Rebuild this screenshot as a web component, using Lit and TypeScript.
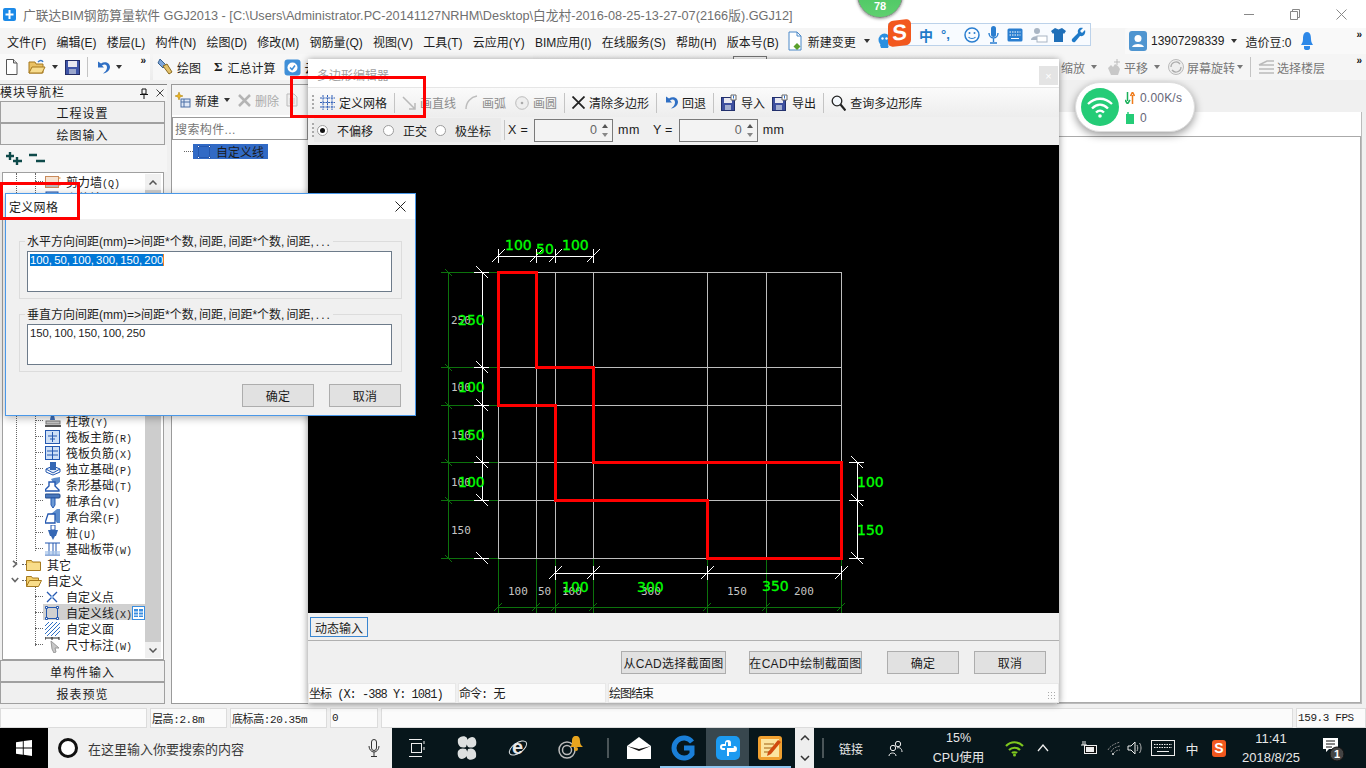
import { LitElement, html, css, svg } from 'lit'
import { customElement } from 'lit/decorators.js'

const ic = (w: number, h: number, body: unknown) => html`<svg class="ic" width=${w} height=${h} viewBox="0 0 ${w} ${h}">${body}</svg>`

const B = '#2458b0'

// toolbar icons
const iNew = ic(13, 16, svg`<path d="M1.5.5h7l3.500 3.500v11.500h-10.500z" fill="#fff" stroke="#555"/><path d="M8.500.5v3.500h3.500" fill="#ddd" stroke="#555"/>`)
const iOpen = ic(18, 16, svg`<path d="M1 3h6l1 2h7v9H1z" fill="#e9c164" stroke="#a5791f"/><path d="M1 14l3-6h13l-3 6z" fill="#f7dc8e" stroke="#a5791f"/><path d="M10 3c2-2 4-2 5 0" fill="none" stroke="#3a7ac8" stroke-width="1.500"/>`)
const iSave = ic(15, 15, svg`<rect x=".5" y=".5" width="14" height="14" fill="#3f55a8" stroke="#222c66"/><rect x="3" y="1" width="9" height="6" fill="#e8e8f0"/><rect x="4" y="9" width="7" height="5" fill="#9aa6cc"/>`)
const iUndo = ic(14, 15, svg`<path d="M2 1.500v6h6l-2-2c3-2 5-.5 5 2 0 2.500-2 4.500-4 6 4-.5 7-3.500 7-6.500 0-4-5-6.500-9-3.500z" fill="#2f6fc4"/>`)
const iDraw = ic(16, 18, svg`<path d="M3 1l6 6-3 3-5-5z" fill="#7ea6d8" stroke="#37608f"/><path d="M6 8l6 8 3-2-5-8z" fill="#e3c16a" stroke="#8a6a20"/>`)
const iCloud = ic(17, 17, svg`<rect x=".5" y=".5" width="16" height="16" rx="3" fill="#3f8fd8"/><circle cx="8.500" cy="8.500" r="5" fill="#fff"/><path d="M6 8.500l2 2 3-4" fill="none" stroke="#3f8fd8" stroke-width="1.500"/>`)
const iNewC = ic(16, 16, svg`<rect x="6" y="7" width="9" height="8" fill="#dfe8f6" stroke="#4a6fa5"/><path d="M6 10h9M9 7v8" stroke="#4a6fa5"/><path d="M4 0l1 3 3 1-3 1-1 3-1-3-3-1 3-1z" fill="#eeb422" stroke="#a67c00" stroke-width=".5"/>`)
const iDel = ic(13, 13, svg`<path d="M1 1l11 11M12 1L1 12" stroke="#b4b4b4" stroke-width="2.500"/>`)
const iCopy = ic(12, 14, svg`<path d="M1 1h7l3 3v9H1z" fill="#eee" stroke="#bbb"/><path d="M3 6h6M3 8h6M3 10h6" stroke="#ccc"/>`)
const iGrid = ic(15, 15, svg`<path d="M3 0v15M7.500 0v15M12 0v15M0 3h15M0 7.500h15M0 12h15" stroke="#2f5fb8" stroke-width="1" stroke-dasharray="2 .7"/>`)
const iLine = ic(14, 14, svg`<path d="M1 1l12 12M13 7v6H7" fill="none" stroke="#b9b9b9" stroke-width="1.500"/>`)
const iArc = ic(13, 15, svg`<path d="M1 14C1 7 6 2 12 1" fill="none" stroke="#bdbdbd" stroke-width="1.500"/>`)
const iCirc = ic(14, 14, svg`<circle cx="7" cy="7" r="6.300" fill="#eee" stroke="#bbb"/><circle cx="7" cy="7" r="1.300" fill="#aaa"/>`)
const iClear = ic(13, 13, svg`<path d="M.5.5l12 12M12.500.5l-12 12" stroke="#222" stroke-width="1.800"/>`)
const iIO = ic(16, 17, svg`<rect x=".5" y="3.500" width="13" height="13" fill="#3d4f9f" stroke="#22306c"/><rect x="3" y="4" width="8" height="5" fill="#e8e8f0"/><rect x="4" y="11" width="6" height="5" fill="#a3aed0"/><path d="M10 1h5v5h-5z" fill="#fff" stroke="#666"/><path d="M12.500 1.500v3" stroke="#2f6fc4"/>`)
const iFind = ic(15, 16, svg`<circle cx="6" cy="6" r="4.800" fill="#f4f8fc" stroke="#222" stroke-width="1.300"/><path d="M9.500 9.500l5 6" stroke="#222" stroke-width="2.200"/>`)
const iDoc = ic(14, 20, svg`<path d="M1 1h8l4 4v14H1z" fill="#fff" stroke="#4a88c8"/><path d="M9 1v4h4" fill="none" stroke="#4a88c8"/><path d="M9 12l3.500 3.500-3.500 3.500-3.500-3.500z" fill="#5aa02c"/>`)
const iPan = ic(16, 18, svg`<path d="M2 10l3-3 2 2 2-3 3 2 2 3-2 6H5z" fill="#c8c8c8"/><path d="M11 1v6M8 4h6" stroke="#bbb"/>`)
const iRot = ic(18, 18, svg`<circle cx="9" cy="9" r="7.500" fill="#eee" stroke="#bbb"/><path d="M4 9a5 5 0 0 1 9-3M14 9a5 5 0 0 1-9 3" fill="none" stroke="#aaa" stroke-width="1.300"/>`)
const iFloor = ic(17, 14, svg`<path d="M1 5l8-4h7M1 9h15M1 13h15M1 5h15" fill="none" stroke="#bbb" stroke-width="1.500"/>`)
const iUser = ic(18, 20, svg`<rect width="18" height="20" rx="3" fill="#4f95d0"/><circle cx="9" cy="7.500" r="3.500" fill="#fff"/><path d="M3 16c1-4 11-4 12 0z" fill="#fff"/>`)
const iBell = ic(14, 20, svg`<path d="M7 1c3 0 4 3 4 7 0 3 1 4 2 6H1c1-2 2-3 2-6 0-4 1-7 4-7z" fill="#2d88e8"/><path d="M4 15h6v2a3 2 0 0 1-6 0z" fill="#2d88e8"/>`)
const iQQ = ic(13, 16, svg`<ellipse cx="6.500" cy="7" rx="6" ry="6.500" fill="#2b8fe0"/><circle cx="4.500" cy="5.500" r="1.200" fill="#fff"/><circle cx="8.500" cy="5.500" r="1.200" fill="#fff"/><path d="M2 12h9l-1 3H3z" fill="#2b8fe0"/>`)

// IME strip
const iMicB = ic(11, 18, svg`<rect x="3" y="0" width="5" height="11" rx="2.500" fill="#2a7ed0"/><path d="M1 7a4.500 5 0 0 0 9 0M5.500 12v4M2 17h7" fill="none" stroke="#2a7ed0" stroke-width="1.400"/>`)
const iSmile = ic(16, 16, svg`<circle cx="8" cy="8" r="7" fill="none" stroke="#2a7ed0" stroke-width="1.500"/><circle cx="5.500" cy="6" r="1" fill="#2a7ed0"/><circle cx="10.500" cy="6" r="1" fill="#2a7ed0"/><path d="M4.500 10c1.500 2 5.500 2 7 0" fill="none" stroke="#2a7ed0" stroke-width="1.200"/>`)
const iKeysB = ic(16, 14, svg`<rect x=".5" y=".5" width="15" height="13" rx="1.500" fill="#2a7ed0"/><path d="M2.500 4h11M2.500 7h11" stroke="#fff" stroke-dasharray="1.500 1"/><path d="M4 10.500h8" stroke="#fff"/>`)
const iPerson = ic(17, 16, svg`<circle cx="6" cy="4" r="3" fill="#a9b5c4"/><path d="M0 13c0-5 11-5 11 0z" fill="#a9b5c4"/><rect x="6" y="9" width="10" height="6" fill="#fff" stroke="#a9b5c4"/>`)
const iShirt = ic(15, 16, svg`<path d="M4 1l3.500 1.500L11 1l4 3-2 3-1-1v9H3V6L2 7 0 4z" fill="#1f6fb8"/>`)
const iWrench = ic(15, 16, svg`<path d="M14 3l-3 3-2-2 3-3c-3-1-6 1-5 5L1 12c-1 2 1 4 3 3l5-6c4 1 6-3 5-6z" fill="#1f7ac8"/>`)

// tree icons
const tBox = (inner: unknown) => ic(16, 14, svg`<rect x=".5" y=".5" width="14" height="13" fill="#cfe0f6" stroke="${B}"/>${inner}`)
const tree = {
  wall: ic(16, 14, svg`<rect x=".5" y="1.500" width="13" height="11" fill="#f6e3d2" stroke="#c98a5a"/><rect x="1" y="8" width="12" height="4" fill="#b8b8b8"/><path d="M14 3h1.500M14 10h1.500" stroke="#e08a20"/>`),
  beam: ic(16, 14, svg`<rect x="1" y="1" width="12" height="11" fill="#9dc0e8" stroke="${B}"/>`),
  pier: ic(16, 14, svg`<path d="M6 1h3l1 5H5z" fill="#3f6fb8"/><rect x="1" y="7" width="14" height="3" fill="#c8c8c8" stroke="#777"/><rect x="0" y="11" width="16" height="2" fill="#555"/>`),
  main: tBox(svg`<path d="M7.500 2v10M3 6h9M5 9h5" stroke="${B}"/>`),
  neg: tBox(svg`<path d="M7.500 1v12M2 5h11M2 9h11" stroke="${B}"/>`),
  iso: ic(16, 15, svg`<path d="M1 8l7-3 7 3-7 4z" fill="#dce8f8" stroke="${B}"/><path d="M1 8v3l7 3 7-3V8" fill="none" stroke="${B}"/><path d="M5 1h6v8H5z" fill="#3567b4"/>`),
  strip: ic(16, 15, svg`<path d="M6 2l3-1 6-1v5l-5 4z" fill="#5c8ccc"/><path d="M4 5h6v4l4 4v1H0v-1l4-4z" fill="#fff" stroke="${B}" stroke-width="1.400"/>`),
  cap: ic(16, 15, svg`<rect x="0" y="1" width="15" height="4" rx="1" fill="#4a78bc" stroke="#234a8a"/><path d="M6 5h4v7l-2 3-2-3z" fill="#6d9ad4" stroke="${B}"/>`),
  cbeam: ic(16, 15, svg`<path d="M6 5l6-5h3v14h-3z" fill="#5c8ccc"/><path d="M3 5h7v9H0z" fill="#fff" stroke="${B}" stroke-width="1.300"/>`),
  pile: ic(16, 15, svg`<rect x="6" y="0" width="4" height="5" fill="#fff" stroke="${B}"/><path d="M3 5h10l-2 6H5z" fill="#3567b4"/><path d="M6 11h4l-2 4z" fill="#3567b4"/>`),
  band: ic(16, 14, svg`<path d="M0 1h15M0 13h15M4 1v12M8 1v12M11 1v12" stroke="${B}"/><rect x="0" y="9" width="15" height="4" fill="#a8c4ea" opacity=".7"/>`),
  point: ic(14, 14, svg`<path d="M2 2l10 10M12 2L2 12" stroke="${B}" stroke-width="1.300"/><circle cx="7" cy="7" r="1.500" fill="#8cb4e8"/>`),
  line: ic(14, 14, svg`<rect x="1.500" y="1.500" width="11" height="11" fill="none" stroke="${B}"/><path d="M.5.5h2v2h-2zM11.500.5h2v2h-2zM.5 11.500h2v2h-2zM11.500 11.500h2v2h-2z" fill="#fff" stroke="${B}"/>`),
  face: ic(15, 14, svg`<path d="M0 4l4-4M0 8l8-8M0 12l12-12M2 14L15 1M6 14l9-9M10 14l5-5" stroke="#2e6fc4"/>`),
  dim: ic(15, 16, svg`<path d="M0 1h14M0 0v3M7 0v3M14 0v3" stroke="#222"/><path d="M6 4l8 7-4 0 1 4-2 1-2-4z" fill="#c8c8c8" stroke="#999"/>`)
}
const folder = ic(15, 12, svg`<path d="M.5 11.500v-10h5l1 1.500h8v8.500z" fill="#f3ce68" stroke="#a5791f"/><rect x="1" y="4" width="13" height="7" fill="#f9dd8a"/>`)
const folderOpen = ic(16, 12, svg`<path d="M.5 11.500v-10h5l1 1.500h6v3" fill="#f3ce68" stroke="#a5791f"/><path d="M.5 11.500l3-6h12l-3 6z" fill="#f9dd8a" stroke="#a5791f"/>`)

const treeRows: [unknown, string, string][] = [
  [tree.pier, '柱墩', 'Y'], [tree.main, '筏板主筋', 'R'], [tree.neg, '筏板负筋', 'X'], [tree.iso, '独立基础', 'P'],
  [tree.strip, '条形基础', 'T'], [tree.cap, '桩承台', 'V'], [tree.cbeam, '承台梁', 'F'], [tree.pile, '桩', 'U'], [tree.band, '基础板带', 'W']
]

const menus = ['文件(F)', '编辑(E)', '楼层(L)', '构件(N)', '绘图(D)', '修改(M)', '钢筋量(Q)', '视图(V)', '工具(T)', '云应用(Y)', 'BIM应用(I)', '在线服务(S)', '帮助(H)', '版本号(B)']

// drawing coordinates, in page pixels
const XS = [498, 536, 555, 593, 707, 766, 841]
const YS = [272, 367, 405, 462, 500, 558]
const POLY = '498,272 536,272 536,367 593,367 593,462 841,462 841,558 707,558 707,500 555,500 555,405 498,405'
const GRAY_L: [number, number, string][] = [[451, 324, '250'], [451, 391, '100'], [451, 439, '150'], [451, 486, '100'], [451, 534, '150'], [508, 595, '100'], [538, 595, '50'], [562, 595, '100'], [641, 595, '300'], [727, 595, '150'], [794, 595, '200']]
const GREEN_L: [number, number, string][] = [[505, 250, '100'], [536, 254, '50'], [562, 250, '100'], [458, 325, '250'], [458, 392, '100'], [458, 440, '150'], [458, 487, '100'], [857, 487, '100'], [857, 535, '150'], [562, 592, '100'], [637, 592, '300'], [762, 591, '350']]

function drawing() {
  const vTick = (x: number, y: number) => svg`<path d="M${x + .5} ${y - 7}v14M${x - 6} ${y + 6}l13-13" stroke="#fff" fill="none"/>`
  const hTick = (x: number, y: number) => svg`<path d="M${x - 8} ${y + .5}h15M${x - 6} ${y - 6}l12 12" stroke="#fff" fill="none"/>`
  return html`<svg class="cad" width="751" height="468" viewBox="308 145 751 468" shape-rendering="crispEdges">
    ${XS.map(x => svg`<path d="M${x + .5} 272V558" stroke="#bdbdbd"/><path d="M${x + .5} 558V613" stroke="#0c720c"/>`)}
    ${YS.map(y => svg`<path d="M498 ${y + .5}H841" stroke="#bdbdbd"/><path d="M441 ${y + .5}H498" stroke="#0c720c"/>${hTick(482, y)}`)}
    <path d="M448.500 272V558M498 607.500H841" stroke="#0c720c"/>
    ${YS.map(y => svg`<path d="M445 ${y - 3}l7 7" stroke="#0c720c" shape-rendering="auto"/>`)}
    ${XS.map(x => svg`<path d="M${x - 4} 611l8-8" stroke="#0c720c" shape-rendering="auto"/>`)}
    <path d="M482.500 272V500M498 256.500H593M857 462V558M555 573.500H841" stroke="#fff"/>
    ${[498, 536, 555, 593].map(x => vTick(x, 256))}
    ${[462, 500, 558].map(y => hTick(857, y))}
    ${[555, 593, 707, 841].map(x => vTick(x, 573))}
    <polygon points=${POLY} fill="none" stroke="#f00" stroke-width="3"/>
    <g shape-rendering="auto">
      ${GRAY_L.map(([x, y, t]) => svg`<text x=${x} y=${y} class="lbl">${t}</text>`)}
      ${GREEN_L.map(([x, y, t]) => svg`<text x=${x} y=${y} class="dim">${t}</text>`)}
    </g>
  </svg>`
}

@customElement('app-root')
export class AppRoot extends LitElement {
  static styles = css`
    :host {
      display: block;
      width: 1366px;
      height: 768px;
      position: relative;
      overflow: hidden;
      font: 12px "Liberation Sans", "Noto Sans CJK SC", sans-serif;
      color: #1c1c1c;
      background: #f0f0f0;
    }
    .ic { display: block; flex: none; }
    .app { display: flex; flex-direction: column; height: 768px; }

    .titlebar { height: 28px; background: #fff; display: flex; align-items: center; padding-left: 3px; color: #707070; font-size: 12.730px; }
    .titlebar .logo { margin-right: 7px; }
    .titlebar .name { flex: 1; white-space: nowrap; }
    .winbtns { display: flex; padding-right: 2px; }
    .winbtns span { width: 46px; display: flex; justify-content: center; }

    .menubar { height: 26px; background: #f5f5f5; display: flex; align-items: center; padding-left: 7px; white-space: nowrap; }
    .menus { display: flex; gap: 10.200px; }
    .change { display: flex; align-items: center; gap: 6px; margin-left: 9px; }
    .caret { width: 0; height: 0; border: 3px solid transparent; border-top: 4px solid #333; border-bottom: 0; flex: none; }
    .caret.light { border-top-color: #777; }
    .change .caret { margin-left: 2px; }
    .qq { margin-left: 8px; }
    .account { margin-left: auto; width: 241px; height: 26px; display: flex; align-items: center; gap: 4px; background: #f9f9f9; border-radius: 3px 0 0 0; padding-left: 4px; position: relative; box-sizing: border-box; }
    .account .caret { margin: 0 4px 0 3px; }
    .account .bell { margin-left: 5px; }
    .more { font: bold 10px "Liberation Sans"; letter-spacing: -1px; color: #111; position: absolute; right: 5px; top: 1px; }

    .toolbars { height: 26px; background: linear-gradient(#f6f6f6, #ececec); display: flex; align-items: center; white-space: nowrap; }
    .tb { display: flex; align-items: center; height: 26px; position: relative; box-sizing: border-box; }
    .tb.a { width: 150px; padding-left: 5px; background: #fafafa; }
    .tb.a .sp { width: 10px; }
    .tb.b { padding-left: 4px; gap: 4px; margin-left: 3px; width: 380px; background: #f7f7f7; }
    .tb.c { width: 307px; padding-left: 2px; gap: 2px; margin-left: auto; color: #777; background: #f5f5f5; }
    .tb.a .caret { margin: 0 7px 0 6px; }
    .tb.a .vsep { margin: 0 8px 0 7px; }
    .tb.c .c1 { margin: 0 7px 0 4px; }
    .tb.c .c2 { margin: 0 5px 0 4px; }
    .tb.c .vsep { margin: 0 5px; }
    .vsep { width: 1px; height: 20px; background: #c4c4c4; flex: none; }
    .sigma { font: bold 13px "Liberation Serif"; margin: 0 1px 0 9px; }

    .main { flex: 1; display: flex; min-height: 0; padding-top: 4px; }
    .nav { width: 167px; flex: none; display: flex; flex-direction: column; padding-bottom: 4px; box-sizing: border-box; }
    .navhead { height: 16px; display: flex; align-items: center; padding: 0 3px 0 0; background: #f5f5f5; border-top: 1px solid #888; line-height: 14px; letter-spacing: 1px; flex: none; }
    .navhead .x { margin-left: auto; display: flex; gap: 8px; align-items: center; letter-spacing: 0; }
    .navbtn { height: 22px; margin: 0 2px 0 0; display: flex; align-items: center; justify-content: center; border: 1px solid #a0a0a0; background: #f0f0f0; letter-spacing: 1px; box-sizing: border-box; flex: none; }
    .plusbar { height: 27px; display: flex; align-items: center; gap: 7px; padding-left: 6px; box-sizing: border-box; background: #f5f5f5; flex: none; }
    .tree { flex: 1; margin: 0 3px 0 2px; border: 1px solid #a0a0a0; background: #fff; display: flex; position: relative; min-height: 0; overflow: hidden; }
    .rows { flex: 1; position: relative; }
    .row { height: 16px; display: grid; grid-template-columns: 17px auto; gap: 4px; align-items: center; padding-left: 42px; position: relative; white-space: nowrap; }
    .row::before { content: ""; width: 8px; border-top: 1px dotted #666; position: absolute; left: 32px; top: 8px; }
    .row .ic { position: relative; }
    .row .key { font: 10px "Liberation Mono", monospace; }
    .row.sel { background: linear-gradient(to right, transparent 40px, #d0d0d0 40px); width: 142px; box-sizing: border-box; }
    .row.top { padding-left: 23px; grid-template-columns: 15px auto; gap: 6px; }
    .row.top::before { left: 19px; width: 4px; }
    .row.top .arrow { position: absolute; left: 8px; top: 4px; }
    .gap { height: 207px; }
    .vline { position: absolute; left: 32px; top: 0; height: 378px; border-left: 1px dotted #666; }
    .vline.out { left: 13px; height: 390px; }
    .vline.sub { top: 413px; height: 60px; }
    .mini { position: absolute; left: 129px; top: 433px; }
    .scroll { width: 16px; background: #cdcdcd; display: flex; flex-direction: column; justify-content: space-between; align-items: center; margin: 1px 2px 1px 0; flex: none; }
    .scroll span { height: 16px; width: 16px; background: #f0f0f0; display: flex; align-items: center; justify-content: center; }

    .comp { width: 137px; margin: 0 0 4px 4px; flex: none; background: #fff; border: 1px solid #9a9a9a; border-right: 0; display: flex; flex-direction: column; white-space: nowrap; overflow: hidden; box-sizing: border-box; }
    .comphead { height: 30px; display: flex; align-items: center; gap: 4px; padding-left: 3px; background: #f4f4f4; flex: none; }
    .comphead .off { color: #aaa; margin-right: 3px; }
    .comphead .caret { margin: 0 4px 0 1px; }
    .search { height: 23px; margin: 2px 0 0; border: 1px solid #999; color: #777; display: flex; align-items: center; padding-left: 2px; letter-spacing: .4px; box-sizing: border-box; flex: none; }
    .item { display: flex; align-items: center; margin: 4px 0 0 12px; height: 15px; }
    .item i { width: 9px; border-top: 1px dotted #666; }
    .item div { width: 75px; height: 15px; background: #316ac5; display: flex; align-items: center; gap: 5px; padding-left: 4px; box-sizing: border-box; }

    .view { flex: 1; padding: 28px 4px 4px 0; display: flex; justify-content: flex-end; }
    .viewbox { width: 305px; background: #fff; border: 1px solid #bbb; border-top: 0; padding-top: 24px; box-sizing: border-box; }
    .viewinner { height: 100%; border: 1px solid #aaa; box-sizing: border-box; }

    .status { height: 20px; display: flex; gap: 3px; background: #f0f0f0; flex: none; }
    .status div { background: #fbfbfb; border: 1px solid #dcdcdc; box-sizing: border-box; display: flex; align-items: center; padding-left: 1px; font: 11px "Liberation Mono", "Noto Sans CJK SC", monospace; letter-spacing: -.4px; flex: none; }

    .taskbar { height: 40px; background: #07161b; display: flex; align-items: center; color: #e8e8e8; position: relative; white-space: nowrap; flex: none; }
    .start { width: 48px; height: 40px; background: #000; display: flex; align-items: center; justify-content: center; flex: none; }
    .searchbox { width: 344px; height: 40px; background: #f0f0f0; display: flex; align-items: center; padding: 0 12px 0 9px; box-sizing: border-box; color: #3a3a3a; font-size: 13px; gap: 9px; flex: none; }
    .searchbox .mic { margin-left: auto; }
    .slot { height: 40px; display: flex; align-items: center; justify-content: center; flex: none; position: relative; }
    .slot.on { background: #38474e; }
    .slot.run::after { content: ""; position: absolute; left: 0; right: 0; bottom: 0; height: 2px; background: #8ec5f0; }
    .thinsep { width: 2px; height: 20px; background: #4a5558; }
    .scrollcol { width: 19px; height: 40px; background: #eee; display: flex; flex-direction: column; align-items: center; justify-content: space-around; margin-left: 4px; flex: none; }
    .cpu { flex-direction: column; line-height: 20px; font-size: 12.500px; }
    .clock { flex-direction: column; line-height: 19px; font-size: 13px; }
    .traygap { width: 19px; flex: none; }
    .zh-tray { font-size: 13px; }
    .s-tray { background: #f2581e; border-radius: 3px; width: 14px; height: 17px; color: #fff; font: bold 14px "Liberation Sans"; display: flex; align-items: center; justify-content: center; }
    .ie-e { font: bold 20px "Liberation Sans"; fill: #e8e8e8; }
    .note-n { font: bold 11px "Liberation Sans"; fill: #fff; }

    .editor { position: absolute; left: 308px; top: 59px; width: 751px; height: 644px; background: #f0f0f0; box-shadow: 0 1px 7px rgba(0, 0, 0, .45); display: flex; flex-direction: column; white-space: nowrap; }
    .edtitle { height: 29px; background: #fff; color: #a0a0a0; padding: 7px 0 0 9px; box-sizing: border-box; position: relative; border-bottom: 1px solid #e6e6e6; flex: none; }
    .edclose { position: absolute; left: 731px; top: 7px; width: 19px; height: 19px; background: #e4e4e4; color: #fff; display: flex; align-items: center; justify-content: center; font-size: 11px; }
    .edtools { height: 29px; background: linear-gradient(#fbfbfb, #ededed); display: flex; align-items: center; padding-left: 4px; gap: 7px; flex: none; }
    .grip { width: 2px; height: 15px; background-image: linear-gradient(#aaa 50%, transparent 50%); background-size: 2px 4px; margin-right: -1px; flex: none; }
    .tool { display: flex; align-items: center; gap: 4px; }
    .tool.off { color: #8c8c8c; padding-right: 2px; }
    .tool.off.end { padding-right: 0; }
    .edopts { height: 24px; margin-top: 1px; display: flex; align-items: center; padding-left: 4px; flex: none; }
    .edopts .grip { margin-right: 0; }
    .radios { display: flex; align-items: center; gap: 8px; height: 24px; background: #eaeaea; padding: 0 10px 0 3px; }
    .radio { display: flex; align-items: center; gap: 9px; }
    .radio.second { margin-left: 2px; }
    .dot { width: 11px; height: 11px; border-radius: 50%; border: 1px solid #9c9c9c; background: #fff; box-sizing: border-box; display: flex; align-items: center; justify-content: center; }
    .dot i { width: 5px; height: 5px; border-radius: 50%; background: #111; }
    .edopts .vsep { margin-left: 3px; }
    .xy { letter-spacing: .3px; margin: 0 6px 0 3px; font-size: 12.500px; }
    .xy.y { margin-left: 0; }
    .spin { width: 79px; height: 23px; background: #f3f3f3; border: 1px solid #7a7a7a; box-sizing: border-box; display: flex; align-items: center; justify-content: flex-end; color: #666; padding-right: 4px; gap: 5px; font-size: 12.500px; }
    .spin b { display: flex; flex-direction: column; gap: 5px; }
    .spin b i { width: 0; height: 0; border: 3px solid transparent; }
    .spin b i:first-child { border-top: 0; border-bottom: 4px solid #555; }
    .spin b i:last-child { border-bottom: 0; border-top: 4px solid #888; }
    .mm { margin: 0 13px 0 5px; font-size: 12.500px; letter-spacing: .5px; }
    .canvas { height: 468px; margin-top: 3px; background: #000; flex: none; }
    .cad { display: block; }
    .cad .lbl { font: 11px "DejaVu Sans Mono", monospace; fill: #c4c4c4; }
    .cad .dim { font: 14px "DejaVu Sans", sans-serif; fill: #0f0; stroke: #0f0; stroke-width: .3px; }
    .dyn { height: 28px; box-sizing: border-box; display: flex; align-items: flex-end; padding: 0 0 3px 2px; border-bottom: 1px solid #b0b0b0; flex: none; }
    .dyn span { width: 58px; height: 20px; box-sizing: border-box; border: 1px solid #3a86d0; display: flex; align-items: center; justify-content: center; background: #f0f0f0; }
    .edbtns { height: 42px; display: flex; align-items: center; justify-content: flex-end; padding-right: 13px; gap: 15px; flex: none; }
    .btn { height: 23px; background: #e1e1e1; border: 1px solid #adadad; box-sizing: border-box; display: flex; align-items: center; justify-content: center; width: 72px; flex: none; letter-spacing: .3px; }
    .btn.w1 { width: 105px; margin-right: 8px; }
    .btn.w2 { width: 113px; margin-right: 10px; }
    .edstatus { height: 20px; display: flex; gap: 2px; flex: none; margin-top: auto; }
    .edstatus div { background: #fbfbfb; border: 1px solid #e8e8e8; box-sizing: border-box; display: flex; align-items: center; font: 12px "Liberation Mono", "Noto Sans CJK SC", monospace; letter-spacing: -1px; width: 148px; }
    .edstatus .fill { flex: 1; position: relative; }
    .gripper { position: absolute; right: 1px; bottom: 1px; width: 10px; height: 10px; background-image: radial-gradient(#aaa 40%, transparent 45%); background-size: 3px 3px; }

    .dialog { position: absolute; left: 5px; top: 193px; width: 411px; height: 223px; background: #f0f0f0; border: 1px solid #4a98e8; box-sizing: border-box; box-shadow: 0 2px 8px rgba(0, 0, 0, .3); display: flex; flex-direction: column; }
    .dlgtitle { height: 25px; background: #fff; display: flex; align-items: center; justify-content: space-between; padding: 0 9px 0 3px; flex: none; letter-spacing: .3px; }
    .dlgbody { padding: 22px 13px 0; flex: 1; display: flex; flex-direction: column; }
    .group { height: 58px; border: 1px solid #dcdcdc; box-sizing: border-box; position: relative; padding: 9px 9px 0 7px; margin-bottom: 15px; flex: none; }
    .legend { position: absolute; left: 5px; top: -6px; background: #f0f0f0; padding: 0 3px 0 2px; line-height: 13px; white-space: nowrap; word-spacing: -1.300px; }
    .group .field { height: 41px; background: #fff; border: 1px solid #6d7b8a; box-sizing: border-box; padding: 2px; font-size: 11.300px; line-height: 13px; white-space: nowrap; word-spacing: -1px; }
    .group mark { background: #0078d7; color: #fff; border-right: 1px solid #f08020; }
    .dlgbtns { display: flex; justify-content: flex-end; gap: 15px; margin-top: -3px; padding-right: 1px; }

    .red { position: absolute; border: 3px solid #f00; box-sizing: border-box; }
    .red.r1 { left: 290px; top: 76px; width: 136px; height: 42px; }
    .red.r2 { left: 0; top: 182px; width: 80px; height: 38px; }

    .pill { position: absolute; left: 1075px; top: 82px; width: 120px; height: 50px; border-radius: 25px; background: #fff; box-shadow: 0 3px 8px rgba(0, 0, 0, .4); border: 1px solid #ddd; box-sizing: border-box; display: flex; align-items: center; padding-left: 5px; gap: 6px; color: #667; }
    .pill .stats { display: flex; flex-direction: column; gap: 5px; margin-top: 2px; }
    .pill .stats div { display: flex; align-items: center; gap: 5px; line-height: 15px; letter-spacing: .2px; }

    .badge { position: absolute; left: 857px; top: -28px; width: 46px; height: 46px; border-radius: 50%; background: linear-gradient(#3fc05a, #5fd070); border: 1px solid #888; display: flex; align-items: flex-end; justify-content: center; color: #fff; font: bold 11px "Liberation Sans"; padding-bottom: 5px; box-sizing: border-box; box-shadow: 0 1px 3px rgba(0, 0, 0, .4); }

    .ime { position: absolute; left: 888px; top: 23px; width: 203px; height: 23px; background: #f8fbff; border: 1px solid #bcd2ea; box-sizing: border-box; display: flex; align-items: center; gap: 6px; }
    .ime .ic { margin-left: 2px; }
    .ime .ic:nth-of-type(5) { margin-left: -3px; }
    .ime .ic:nth-of-type(6) { margin-left: -1px; }
    .sogou { position: absolute; left: 888px; top: 20px; width: 23px; height: 26px; background: #f2581e; border-radius: 5px; transform: skewY(-6deg); color: #fff; font: bold 22px "Liberation Sans"; display: flex; align-items: center; justify-content: center; }
    .ime .zh { color: #1f7ac8; font-weight: bold; font-size: 14px; margin-left: 30px; width: 16px; }
    .ime .pt { color: #1f7ac8; font-weight: bold; width: 15px; font-size: 13px; }
    .boxtop { position: absolute; left: 733px; top: 56px; width: 34px; height: 4px; border: 1px solid #777; border-bottom: 0; box-sizing: border-box; background: #fff; }
  `

  private renderMenu() {
    return html`<div class="menubar">
      <div class="menus">${menus.map(m => html`<span>${m}</span>`)}</div>
      <div class="change">${iDoc}<span>新建变更</span><i class="caret"></i></div>
      <span class="qq">${iQQ}</span>
      <div class="account">
        ${iUser}<span>13907298339</span><i class="caret"></i><span>造价豆:0</span>
        <span class="bell">${iBell}</span>
        <span class="more">»</span>
      </div>
    </div>`
  }

  private renderToolbars() {
    return html`<div class="toolbars">
      <div class="tb a">
        ${iNew}<span class="sp"></span>${iOpen}<i class="caret"></i>${iSave}<i class="vsep"></i>${iUndo}<i class="caret"></i>
        <span class="more">»</span>
      </div>
      <div class="tb b">
        ${iDraw}<span>绘图</span><span class="sigma">Σ</span><span>汇总计算</span><span></span>${iCloud}<span>云</span>
      </div>
      <div class="tb c">
        <span>缩放</span><i class="caret light c1"></i>${iPan}<span>平移</span><i class="caret light c2"></i>${iRot}<span>屏幕旋转</span><i class="caret light"></i><i class="vsep"></i>${iFloor}<span>选择楼层</span>
        <span class="more">»</span>
      </div>
    </div>`
  }

  private renderNav() {
    const row = ([icon, name, key]: [unknown, string, string]) => html`<div class="row">${icon}<span>${name}<span class="key">(${key})</span></span></div>`
    const arrow = (d: string) => html`<svg class="ic arrow" width="8" height="8" viewBox="0 0 8 8"><path d=${d} fill="none" stroke="#666" stroke-width="1.600"/></svg>`
    return html`<div class="nav">
      <div class="navhead"><span>模块导航栏</span><span class="x">
        <svg class="ic" width="8" height="11" viewBox="0 0 8 11"><path d="M2 1h4v5H2zM0 6.500h8M4 7v4" fill="none" stroke="#111"/></svg>
        <svg class="ic" width="8" height="8" viewBox="0 0 8 8"><path d="M.5.5l7 7M7.500.5l-7 7" stroke="#444"/></svg></span></div>
      <div class="navbtn">工程设置</div>
      <div class="navbtn">绘图输入</div>
      <div class="plusbar">
        <svg class="ic" width="16" height="13" viewBox="0 0 16 13"><path d="M4 0v8M0 4h8M11 5v8M7 9h9" stroke="#0e4a4a" stroke-width="2.400"/></svg>
        <svg class="ic" width="16" height="13" viewBox="0 0 16 13"><path d="M0 3h8M7 9h9" stroke="#0e4a4a" stroke-width="2.400"/></svg>
      </div>
      <div class="tree">
        <div class="rows">
          <i class="vline out"></i><i class="vline"></i><i class="vline sub"></i>
          ${row([tree.wall, '剪力墙', 'Q'])}
          ${row([tree.beam, '砌体墙', 'Q'])}
          <div class="gap"></div>
          ${treeRows.map(row)}
          <div class="row top">${arrow('M2 .8l3.500 3.200L2 7.200')}${folder}<span>其它</span></div>
          <div class="row top">${arrow('M.8 2l3.200 3.500L7.200 2')}${folderOpen}<span>自定义</span></div>
          <div class="row">${tree.point}<span>自定义点</span></div>
          <div class="row sel">${tree.line}<span>自定义线<span class="key">(X)</span></span></div>
          <div class="row">${tree.face}<span>自定义面</span></div>
          <div class="row">${tree.dim}<span>尺寸标注<span class="key">(W)</span></span></div>
          <span class="mini"><svg class="ic" width="13" height="14" viewBox="0 0 13 14"><rect x=".5" y=".5" width="12" height="13" fill="#fff" stroke="#3a8ee0"/><path d="M2 3h4v8H2zM7 3h4v8H7z" fill="#3a8ee0"/><path d="M2 6h9M2 9h9" stroke="#fff"/></svg></span>
        </div>
        <div class="scroll">
          <span><svg class="ic" width="8" height="5" viewBox="0 0 8 5"><path d="M.5 4.500L4 1l3.500 3.500" fill="none" stroke="#555" stroke-width="1.500"/></svg></span>
          <span><svg class="ic" width="8" height="5" viewBox="0 0 8 5"><path d="M.5.5L4 4 7.500.5" fill="none" stroke="#555" stroke-width="1.500"/></svg></span>
        </div>
      </div>
      <div class="navbtn">单构件输入</div>
      <div class="navbtn">报表预览</div>
    </div>`
  }

  private renderComp() {
    return html`<div class="comp">
      <div class="comphead">${iNewC}<span>新建</span><i class="caret"></i>${iDel}<span class="off">删除</span>${iCopy}</div>
      <div class="search">搜索构件...</div>
      <div class="item"><i></i><div>${tree.line}<span>自定义线</span></div></div>
    </div>`
  }

  private renderStatus() {
    const cells: [number, string][] = [[147, ''], [77, '层高:2.8m'], [97, '底标高:20.35m'], [48, '0'], [912, ''], [70, '159.3 FPS']]
    return html`<div class="status">${cells.map(([w, t]) => html`<div style="width:${w}px">${t}</div>`)}</div>`
  }

  private renderTaskbar() {
    const slot = (w: number, body: unknown, cls = '') => html`<div class="slot ${cls}" style="width:${w}px">${body}</div>`
    return html`<div class="taskbar">
      <div class="start"><svg class="ic" width="16" height="16" viewBox="0 0 16 16"><path d="M0 2.200l6.800-1v6.300H0zM7.700 1l8.300-1v7.500H7.700zM0 8.400h6.800v6.400l-6.800-1zM7.700 8.400H16V16l-8.300-1.200z" fill="#fff"/></svg></div>
      <div class="searchbox">
        <svg class="ic" width="22" height="22" viewBox="0 0 22 22"><circle cx="11" cy="11" r="8.500" fill="#fff" stroke="#111" stroke-width="3"/></svg>
        <span>在这里输入你要搜索的内容</span>
        <svg class="ic mic" width="12" height="18" viewBox="0 0 12 18"><rect x="3.500" y=".5" width="5" height="11" rx="2.500" fill="none" stroke="#333"/><path d="M1 7a5 6 0 0 0 10 0M6 13v4M3 17.500h6" fill="none" stroke="#333"/></svg>
      </div>
      ${slot(49, html`<svg class="ic" width="16" height="20" viewBox="0 0 16 20"><rect x="2.500" y="5.500" width="10" height="9" fill="none" stroke="#eee"/><path d="M0 1.500h13M0 18.500h13M15 3v3M15 9v3" stroke="#eee"/></svg>`)}
      ${slot(51, html`<svg class="ic" width="22" height="26" viewBox="0 0 22 26"><path d="M10 12C4 14 1 10 2 4c2-3 7-4 9-1 1 3 0 6-1 9zM12 12c-3-5-1-9 4-10 4 0 5 5 4 8-2 3-5 3-8 2zM12 14c6-2 9 2 8 8-2 3-7 4-9 1-1-3 0-6 1-9zM10 14c3 5 1 9-4 10-4 0-5-5-4-8 2-3 5-3 8-2z" fill="#dde0e0"/></svg>`)}
      ${slot(52, html`<svg class="ic" width="22" height="24" viewBox="0 0 22 24"><ellipse cx="11" cy="12" rx="10" ry="5" fill="none" stroke="#dfe4e6" transform="rotate(-35 11 12)"/><text x="5" y="18" class="ie-e">e</text></svg>`)}
      ${slot(53, html`<svg class="ic" width="28" height="26" viewBox="0 0 28 26"><circle cx="10" cy="15" r="8" fill="none" stroke="#bbb" stroke-width="1.500"/><circle cx="10" cy="15" r="4.500" fill="none" stroke="#bbb" stroke-width="1.500"/><path d="M19 1c3 0 4 2 4 5s1 4 3 6H13c2-2 2-3 2-6s1-5 4-5z" fill="#e8a51e"/><circle cx="19" cy="14" r="2" fill="#e8a51e"/></svg>`)}
      ${slot(21, html`<i class="thinsep"></i>`)}
      ${slot(42, html`<svg class="ic" width="24" height="22" viewBox="0 0 24 22"><path d="M0 9L12 0l12 9v13H0z" fill="#fff"/><path d="M0 9l12 5 12-5-12 3z" fill="#111"/></svg>`)}
      ${slot(46, html`<svg class="ic" width="24" height="26" viewBox="0 0 24 26"><path d="M21 7A10 10 0 1 0 21 19V13H13" fill="none" stroke="#1a7fd8" stroke-width="5"/></svg>`, 'run')}
      ${slot(43, html`<svg class="ic" width="24" height="24" viewBox="0 0 24 24"><rect width="24" height="24" rx="5" fill="#1c9af0"/><path d="M12 4a3 3 0 0 1 3 3v3h3a3 3 0 0 1 0 6h-5v4h-2v-8h6a1 1 0 0 0 0-2h-5V7a1 1 0 0 0-2 0v3H7a1 1 0 0 0 0 2h2v2H7a3 3 0 0 1 0-6h2V7a3 3 0 0 1 3-3z" fill="#fff"/></svg>`, 'on run')}
      ${slot(42, html`<svg class="ic" width="24" height="24" viewBox="0 0 24 24"><rect width="24" height="24" rx="3" fill="#f0a030"/><rect x="3" y="3" width="18" height="18" fill="#fbe4a0"/><path d="M6 8h10M6 12h8M6 16h6" stroke="#a06010"/><path d="M20 4L10 16l-1 4 4-2L23 6z" fill="#d04a10"/></svg>`, 'run')}
      <div class="scrollcol">
        <svg class="ic" width="10" height="6" viewBox="0 0 10 6"><path d="M1 5l4-4 4 4" fill="none" stroke="#333" stroke-width="1.500"/></svg>
        <svg class="ic" width="10" height="6" viewBox="0 0 10 6"><path d="M1 1l4 4 4-4" fill="none" stroke="#333" stroke-width="1.500"/></svg>
      </div>
      ${slot(18, html`<i class="thinsep"></i>`)}
      ${slot(38, html`<span>链接</span>`)}
      ${slot(50, html`<svg class="ic" width="15" height="17" viewBox="0 0 15 17"><circle cx="10" cy="4" r="2.700" fill="none" stroke="#eee"/><circle cx="5" cy="8" r="2.700" fill="none" stroke="#eee"/><path d="M1 16c0-4 7-4 7 0M9 8c2-1 5 0 5 4" fill="none" stroke="#eee"/></svg>`)}
      ${slot(77, html`<span>15%</span><span>CPU使用</span>`, 'cpu')}
      ${slot(34, html`<svg class="ic" width="19" height="17" viewBox="0 0 19 17"><path d="M1 6c5-5 12-5 17 0M4 10c3-3 8-3 11 0M7 13c1-1 4-1 5 0" fill="none" stroke="#7ec71e" stroke-width="2.200"/><circle cx="9.500" cy="15" r="1.500" fill="#7ec71e"/></svg>`)}
      ${slot(24, html`<svg class="ic" width="12" height="8" viewBox="0 0 12 8"><path d="M1 7l5-6 5 6" fill="none" stroke="#eee" stroke-width="1.300"/></svg>`)}
      <span class="traygap"></span>
      ${slot(30, html`<svg class="ic" width="17" height="14" viewBox="0 0 17 14"><rect x="3.500" y="4.500" width="12" height="8" fill="#111" stroke="#eee"/><rect x="5" y="6" width="8" height="5" fill="#eee"/><path d="M2 0v4M4 0v4M0 4h6" stroke="#eee"/></svg>`)}
      ${slot(20, html`<svg class="ic" width="14" height="14" viewBox="0 0 14 14"><path d="M1 9c2-4 6-6 12-8M4 11c1-3 4-5 9-6M7 12c1-2 3-3 6-3" fill="none" stroke="#888" stroke-dasharray="2 1"/><circle cx="6" cy="13" r="1" fill="#eee"/></svg>`)}
      ${slot(20, html`<svg class="ic" width="15" height="14" viewBox="0 0 15 14"><path d="M1 5v4h3l4 4V1L4 5z" fill="none" stroke="#eee"/><path d="M10 4c1 2 1 4 0 6M12.500 2c2 3 2 7 0 10" fill="none" stroke="#bbb"/></svg>`)}
      ${slot(38, html`<svg class="ic" width="24" height="16" viewBox="0 0 24 16"><rect x=".5" y=".5" width="23" height="15" fill="none" stroke="#eee"/><path d="M3 4.500h18M3 7.500h18" stroke="#eee" stroke-dasharray="1.500 1"/><path d="M6 11.500h12" stroke="#eee"/></svg>`)}
      ${slot(20, html`<span class="zh-tray">中</span>`)}
      ${slot(34, html`<span class="s-tray">S</span>`)}
      ${slot(70, html`<span>11:41</span><span>2018/8/25</span>`, 'clock')}
      ${slot(53, html`<svg class="ic" width="26" height="26" viewBox="0 0 26 26"><path d="M3 3h15v11h-9l-3 3v-3H3z" fill="#fff"/><path d="M6 6h9M6 9h9M6 12h6" stroke="#111"/><circle cx="17" cy="19" r="7" fill="#444" stroke="#111"/><text x="14" y="23" class="note-n">1</text></svg>`)}
    </div>`
  }

  private renderEditor() {
    const sep = html`<i class="vsep"></i>`
    return html`<div class="editor">
      <div class="edtitle">多边形编辑器<span class="edclose">×</span></div>
      <div class="edtools">
        <i class="grip"></i>
        <div class="tool">${iGrid}<span>定义网格</span></div>${sep}
        <div class="tool off">${iLine}<span>画直线</span></div>
        <div class="tool off">${iArc}<span>画弧</span></div>
        <div class="tool off end">${iCirc}<span>画圆</span></div>${sep}
        <div class="tool">${iClear}<span>清除多边形</span></div>${sep}
        <div class="tool">${iUndo}<span>回退</span></div>${sep}
        <div class="tool">${iIO}<span>导入</span></div>
        <div class="tool">${iIO}<span>导出</span></div>${sep}
        <div class="tool">${iFind}<span>查询多边形库</span></div>
      </div>
      <div class="edopts">
        <i class="grip"></i>
        <div class="radios">
          <div class="radio"><span class="dot"><i></i></span><span>不偏移</span></div>
          <div class="radio second"><span class="dot"></span><span>正交</span></div>
          <div class="radio"><span class="dot"></span><span>极坐标</span></div>
        </div>
        <i class="vsep"></i>
        <span class="xy">X =</span>
        <div class="spin"><span>0</span><b><i></i><i></i></b></div><span class="mm">mm</span>
        <span class="xy y">Y =</span>
        <div class="spin"><span>0</span><b><i></i><i></i></b></div><span class="mm">mm</span>
      </div>
      <div class="canvas">${drawing()}</div>
      <div class="dyn"><span>动态输入</span></div>
      <div class="edbtns">
        <div class="btn w1">从CAD选择截面图</div>
        <div class="btn w2">在CAD中绘制截面图</div>
        <div class="btn">确定</div>
        <div class="btn">取消</div>
      </div>
      <div class="edstatus">
        <div>坐标 (X: -388 Y: 1081)</div>
        <div>命令: 无</div>
        <div class="fill">绘图结束<i class="gripper"></i></div>
      </div>
    </div>`
  }

  private renderDialog() {
    return html`<div class="dialog">
      <div class="dlgtitle"><span>定义网格</span>
        <svg class="ic" width="11" height="11" viewBox="0 0 11 11"><path d="M.5.5l10 10M10.500.5l-10 10" stroke="#222"/></svg></div>
      <div class="dlgbody">
        <div class="group"><span class="legend">水平方向间距(mm)=>间距*个数, 间距, 间距*个数, 间距, . . .</span>
          <div class="field"><mark>100, 50, 100, 300, 150, 200</mark></div></div>
        <div class="group"><span class="legend">垂直方向间距(mm)=>间距*个数, 间距, 间距*个数, 间距, . . .</span>
          <div class="field">150, 100, 150, 100, 250</div></div>
        <div class="dlgbtns"><div class="btn">确定</div><div class="btn">取消</div></div>
      </div>
    </div>`
  }

  render() {
    return html`<div class="app">
      <div class="titlebar">
        <span class="logo"><svg class="ic" width="13" height="13" viewBox="0 0 13 13"><rect width="13" height="13" rx="2" fill="#1c8ae8"/><path d="M6.500 2v9M2.500 6.500h8" stroke="#fff" stroke-width="2"/></svg></span>
        <span class="name">广联达BIM钢筋算量软件 GGJ2013 - [C:\\Users\\Administrator.PC-20141127NRHM\\Desktop\\白龙村-2016-08-25-13-27-07(2166版).GGJ12]</span>
        <div class="winbtns">
          <span><svg class="ic" width="10" height="10" viewBox="0 0 10 10"><path d="M0 5.500h10" stroke="#888"/></svg></span>
          <span><svg class="ic" width="10" height="11" viewBox="0 0 10 11"><path d="M.5 2.500h7v8h-7zM2.500 2.500v-2h7v8h-2" fill="none" stroke="#888"/></svg></span>
          <span><svg class="ic" width="11" height="11" viewBox="0 0 11 11"><path d="M.5.5l10 10M10.500.5l-10 10" stroke="#888"/></svg></span>
        </div>
      </div>
      ${this.renderMenu()}
      ${this.renderToolbars()}
      <div class="main">
        ${this.renderNav()}
        ${this.renderComp()}
        <div class="view"><div class="viewbox"><div class="viewinner"></div></div></div>
      </div>
      ${this.renderStatus()}
      ${this.renderTaskbar()}
    </div>
    <i class="boxtop"></i>
    ${this.renderEditor()}
    ${this.renderDialog()}
    <i class="red r1"></i>
    <i class="red r2"></i>
    <div class="pill">
      <svg class="ic" width="38" height="38" viewBox="0 0 38 38"><circle cx="19" cy="19" r="19" fill="#25cc77"/><path d="M7 16c7-7 17-7 24 0M11 20.500c5-5 11-5 16 0M15 24.500c2.500-2.500 5.500-2.500 8 0" fill="none" stroke="#fff" stroke-width="2.300"/><circle cx="19" cy="28" r="1.800" fill="#fff"/></svg>
      <div class="stats">
        <div><svg class="ic" width="10" height="12" viewBox="0 0 10 12"><path d="M2.500 0v9M0 8l2.500 4L5 8" fill="none" stroke="#1ab05a" stroke-width="1.500"/><path d="M7.500 12V3M5.500 4l2-4 2 4" fill="none" stroke="#ef7a1a" stroke-width="1.500"/></svg><span>0.00K/s</span></div>
        <div><svg class="ic" width="10" height="12" viewBox="0 0 10 12"><rect x="1" y="2" width="8" height="10" fill="#25cc77"/><path d="M3 0v2" stroke="#25cc77" stroke-width="1.500"/></svg><span>0</span></div>
      </div>
    </div>
    <div class="badge">78</div>
    <div class="ime">
      <span class="zh">中</span><span class="pt">°,</span>${iSmile}${iMicB}${iKeysB}${iPerson}${iShirt}${iWrench}
    </div>
    <div class="sogou">S</div>`
  }
}
